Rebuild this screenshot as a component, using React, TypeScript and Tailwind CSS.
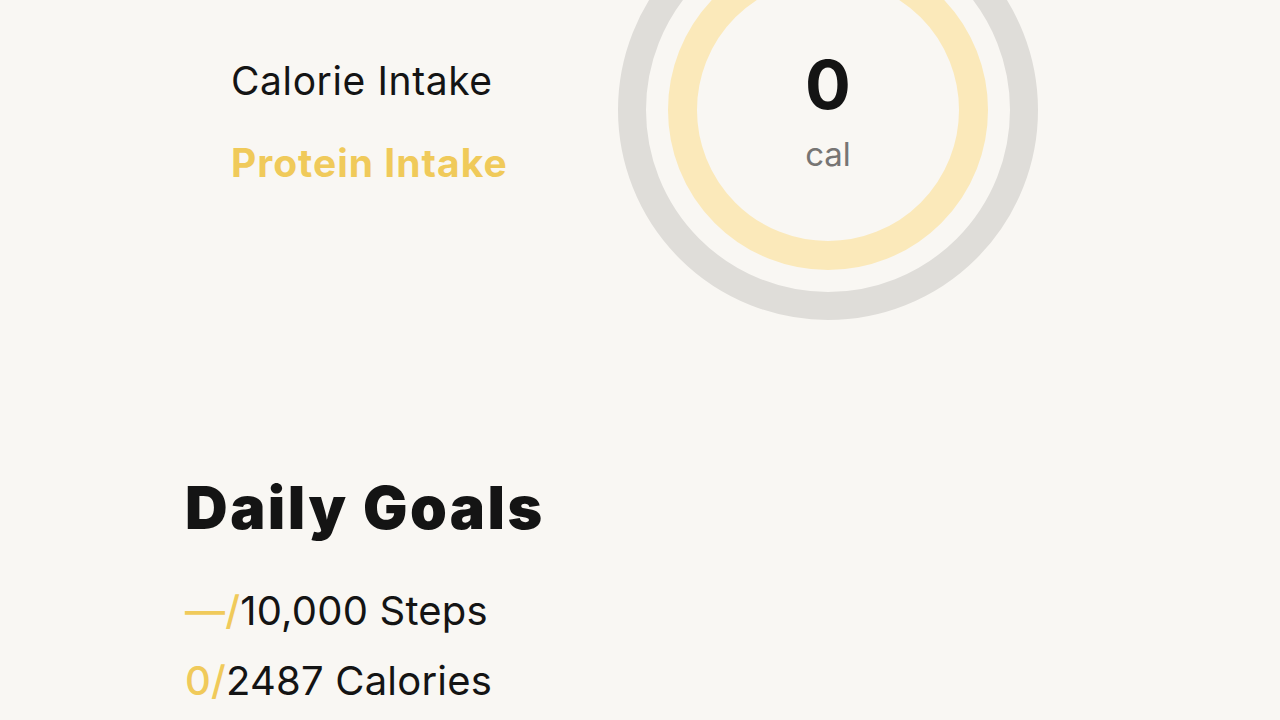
import React from 'react'

function CalorieRing({ value }: { value: number }) {
  return (
    <div className="relative w-[420px] h-[420px] shrink-0">
      <svg width="420" height="420" viewBox="0 0 420 420" className="absolute inset-0">
        <circle cx="210" cy="210" r="196" fill="none" stroke="#dfddd9" strokeWidth="28" />
        <circle cx="210" cy="210" r="145.5" fill="none" stroke="#fbe9ba" strokeWidth="29" />
      </svg>
      <div className="absolute inset-0 flex flex-col items-center justify-center">
        <span className="text-[68px] leading-none font-bold text-[#141414] mt-[0px]">{value}</span>
        <span className="text-[33px] leading-none text-[#777573] mt-[20px]">cal</span>
      </div>
    </div>
  )
}

export default function App() {
  const goals = [
    { done: '—', total: '10,000 Steps' },
    { done: '0', total: '2487 Calories' },
  ]

  return (
    <div
      className="min-h-screen bg-[#f9f7f3] overflow-hidden text-[#141414]"
      style={{ fontFamily: 'Inter, "Noto Sans", sans-serif' }}
    >
      {/* Intake summary */}
      <section className="flex items-start pl-[231px] -mt-[100px]">
        <div className="w-[387px] pt-[159px] flex flex-col gap-[38px]">
          <h2 className="text-[39px] leading-[44px] font-normal tracking-[0.6px]">Calorie Intake</h2>
          <h2 className="text-[39px] leading-[44px] font-bold text-[#f0ca5a] tracking-[1px]">Protein Intake</h2>
        </div>
        <CalorieRing value={0} />
      </section>

      {/* Daily goals */}
      <section className="pl-[185px] mt-[156px]">
        <h1 className="text-[59px] leading-[64px] font-black tracking-[2.5px]">Daily Goals</h1>
        <ul className="mt-[47px] flex flex-col gap-[22px]">
          {goals.map(g => (
            <li key={g.total} className="text-[40px] leading-[48px] tracking-[0.2px]">
              <span className="text-[#f0ca5a] font-medium">{g.done}/</span>
              <span>{g.total}</span>
            </li>
          ))}
        </ul>
      </section>
    </div>
  )
}
